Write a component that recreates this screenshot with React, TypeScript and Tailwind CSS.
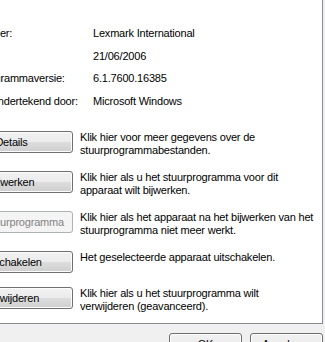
import React from "react";

const info = [
  { label: "Leverancier:", value: "Lexmark International" },
  { label: "Datum:", value: "21/06/2006" },
  { label: "Stuurprogrammaversie:", value: "6.1.7600.16385" },
  { label: "Digitaal ondertekend door:", value: "Microsoft Windows" },
];

const actions = [
  {
    label: "Details",
    desc: ["Klik hier voor meer gegevens over de", "stuurprogrammabestanden."],
    disabled: false,
  },
  {
    label: "Bijwerken",
    desc: ["Klik hier als u het stuurprogramma voor dit", "apparaat wilt bijwerken."],
    disabled: false,
  },
  {
    label: "Vorig stuurprogramma",
    desc: ["Klik hier als het apparaat na het bijwerken van het", "stuurprogramma niet meer werkt."],
    disabled: true,
  },
  {
    label: "Uitschakelen",
    desc: ["Het geselecteerde apparaat uitschakelen."],
    disabled: false,
  },
  {
    label: "Verwijderen",
    desc: ["Klik hier als u het stuurprogramma wilt", "verwijderen (geavanceerd)."],
    disabled: false,
  },
];

const btn =
  "flex items-center justify-center rounded-[3px] border border-[#707070] bg-[linear-gradient(#f2f2f2_0%,#ebebeb_50%,#dddddd_50%,#cfcfcf_100%)] shadow-[inset_0_0_0_1px_#fcfcfc] text-black";
const btnDisabled =
  "flex items-center justify-center rounded-[3px] border border-[#adb2b5] bg-[#f4f4f4] text-[#838383]";

export default function App() {
  return (
    <div className="w-[325px] h-[342px] overflow-hidden bg-[#f0f0f0] font-['Liberation_Sans',Arial,sans-serif] text-[11px] tracking-[-0.2px] text-black">
      <div className="w-[323px] h-[324px] bg-white border-r border-b border-[#898c95] overflow-hidden">
        {/* Driver info */}
        <div className="pt-[22px] ml-[-46px]">
          {info.map((row, i) => (
            <div key={i} className="flex items-center h-[22.7px]">
              <span className="w-[139px] shrink-0 whitespace-nowrap">{row.label}</span>
              <span className="whitespace-nowrap">{row.value}</span>
            </div>
          ))}
        </div>

        {/* Action buttons */}
        <div className="mt-[18px] flex flex-col gap-[14px]">
          {actions.map((a, i) => (
            <div key={i} className="flex items-start ml-[-50px]">
              <div
                className={`${a.disabled ? btnDisabled : btn} w-[123px] h-[22px] shrink-0 whitespace-nowrap`}
              >
                {a.label}
              </div>
              <div className="ml-[7px] shrink-0 leading-[13px] whitespace-nowrap">
                {a.desc.map((line, j) => (
                  <div key={j}>{line}</div>
                ))}
              </div>
            </div>
          ))}
        </div>
      </div>

      {/* Dialog buttons */}
      <div className="flex justify-end gap-[8px] pr-[2px] pt-[9px]">
        <div className={`${btn} w-[73px] h-[23px]`}>OK</div>
        <div className={`${btn} w-[73px] h-[23px]`}>Annuleren</div>
      </div>
    </div>
  );
}
